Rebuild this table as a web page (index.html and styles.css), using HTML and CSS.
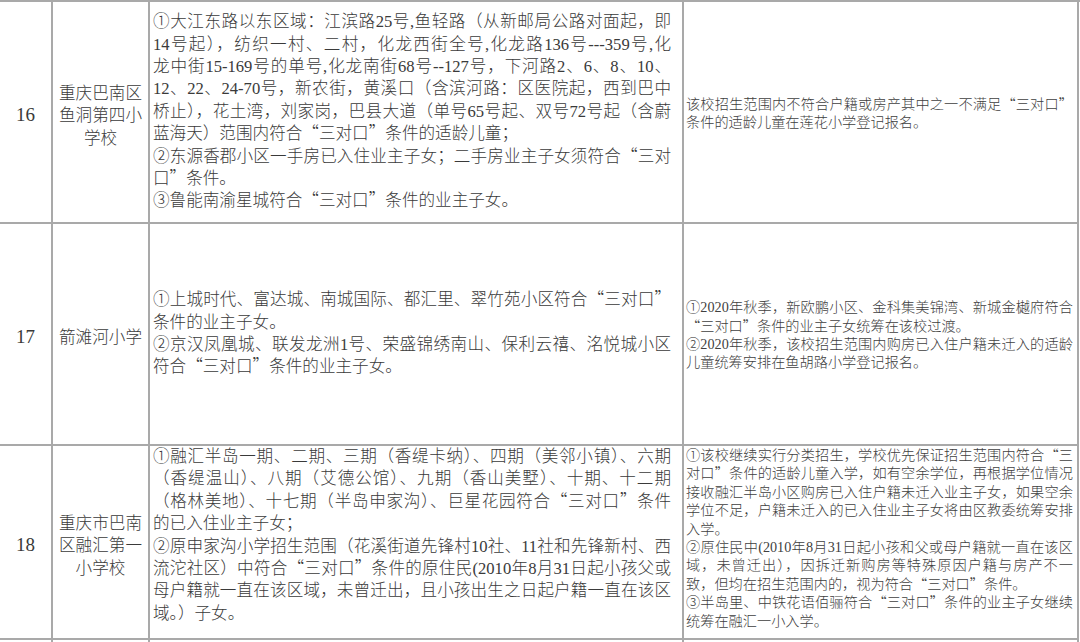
FILE: index.html
```html
<!DOCTYPE html>
<html lang="zh-CN">
<head>
<meta charset="utf-8">
<title>招生范围</title>
<link rel="stylesheet" href="styles.css">
</head>
<body>
<div class="sheet">
  <!-- 16 -->
  <div class="cell num">16</div>
  <div class="cell name">重庆巴南区鱼洞第四小学校</div>
  <div class="cell range">
    <div class="para">
      <span class="ln">①大江东路以东区域：江滨路25号,鱼轻路（从新邮局公路对面起，即</span>
      <span class="ln">14号起），纺织一村、二村，化龙西街全号,化龙路136号---359号,化</span>
      <span class="ln">龙中街15-169号的单号,化龙南街68号--127号，下河路2、6、8、10、</span>
      <span class="ln">12、22、24-70号，新农街，黄溪口（含滨河路：区医院起，西到巴中</span>
      <span class="ln">桥止），花土湾，刘家岗，巴县大道（单号65号起、双号72号起（含蔚</span>
      蓝海天）范围内符合<span class="q">“三对口”</span>条件的适龄儿童；
    </div>
    <div class="para">
      <span class="ln">②东源香郡小区一手房已入住业主子女；二手房业主子女须符合<span class="q">“三对</span></span>
      <span class="q">口”</span>条件。
    </div>
    <div class="para">③鲁能南渝星城符合<span class="q">“三对口”</span>条件的业主子女。</div>
  </div>
  <div class="cell note">
    <div class="para">
      <span class="ln">该校招生范围内不符合户籍或房产其中之一不满足<span class="q">“三对口”</span></span>
      条件的适龄儿童在莲花小学登记报名。
    </div>
  </div>

  <!-- 17 -->
  <div class="cell num">17</div>
  <div class="cell name">箭滩河小学</div>
  <div class="cell range">
    <div class="para">
      <span class="ln">①上城时代、富达城、南城国际、都汇里、翠竹苑小区符合<span class="q">“三对口”</span></span>
      条件的业主子女。
    </div>
    <div class="para">
      <span class="ln">②京汉凤凰城、联发龙洲1号、荣盛锦绣南山、保利云禧、洺悦城小区</span>
      符合<span class="q">“三对口”</span>条件的业主子女。
    </div>
  </div>
  <div class="cell note">
    <div class="para">
      <span class="ln">①2020年秋季，新欧鹏小区、金科集美锦湾、新城金樾府符合</span>
      <span class="q">“三对口”</span>条件的业主子女统筹在该校过渡。
    </div>
    <div class="para">
      <span class="ln">②2020年秋季，该校招生范围内购房已入住户籍未迁入的适龄</span>
      儿童统筹安排在鱼胡路小学登记报名。
    </div>
  </div>

  <!-- 18 -->
  <div class="cell num">18</div>
  <div class="cell name">重庆市巴南区融汇第一小学校</div>
  <div class="cell range top">
    <div class="para">
      <span class="ln">①融汇半岛一期、二期、三期（香缇卡纳）、四期（美邻小镇）、六期</span>
      <span class="ln">（香缇温山）、八期（艾德公馆）、九期（香山美墅）、十期、十二期</span>
      <span class="ln">（格林美地）、十七期（半岛申家沟）、巨星花园符合<span class="q">“三对口”</span>条件</span>
      的已入住业主子女；
    </div>
    <div class="para">
      <span class="ln">②原申家沟小学招生范围（花溪街道先锋村10社、11社和先锋新村、西</span>
      <span class="ln">流沱社区）中符合<span class="q">“三对口”</span>条件的原住民(2010年8月31日起小孩父或</span>
      <span class="ln">母户籍就一直在该区域，未曾迁出，且小孩出生之日起户籍一直在该区</span>
      域。）子女。
    </div>
  </div>
  <div class="cell note top">
    <div class="para">
      <span class="ln">①该校继续实行分类招生，学校优先保证招生范围内符合<span class="q">“三</span></span>
      <span class="ln">对口<span class="q">”</span>条件的适龄儿童入学，如有空余学位，再根据学位情况</span>
      <span class="ln">接收融汇半岛小区购房已入住户籍未迁入业主子女，如果空余</span>
      <span class="ln">学位不足，户籍未迁入的已入住业主子女将由区教委统筹安排</span>
      入学。
    </div>
    <div class="para">
      <span class="ln">②原住民中(2010年8月31日起小孩和父或母户籍就一直在该区</span>
      <span class="ln">域，未曾迁出），因拆迁新购房等特殊原因户籍与房产不一</span>
      致，但均在招生范围内的，视为符合<span class="q">“三对口”</span>条件。
    </div>
    <div class="para">
      <span class="ln">③半岛里、中铁花语佰骊符合<span class="q">“三对口”</span>条件的业主子女继续</span>
      统筹在融汇一小入学。
    </div>
  </div>

  <!-- next row (cut off at the frame edge) -->
  <div class="cell num last"></div>
  <div class="cell name last"></div>
  <div class="cell range last"></div>
  <div class="cell note last"></div>
</div>
</body>
</html>
```

FILE: styles.css
```css
html, body {
  margin: 0;
  padding: 0;
  background: #ffffff;
}

body {
  width: 1080px;
  height: 642px;
  overflow: hidden;
  font-family: "Liberation Serif", "Noto Sans CJK SC", serif;
  color: #3a3a3a;
}

.sheet {
  display: grid;
  grid-template-columns: 53px 97px 534px 395px;
  grid-template-rows: 222px 222px 194px 2px;
  border-top: 2px solid #a9a9a9;
}

.cell {
  border-right: 2px solid #a9a9a9;
  border-bottom: 2px solid #a9a9a9;
  display: flex;
  flex-direction: column;
  justify-content: center;
  min-width: 0;
}

.cell.top {
  justify-content: flex-start;
}

.cell.last {
  border-bottom: none;
  padding: 0;
}

.num {
  align-items: center;
  font-size: 19px;
  padding-top: 5px;
}

.name {
  font-family: "Noto Sans CJK SC", sans-serif;
  font-weight: 300;
  font-size: 16.6px;
  line-height: 22.5px;
  text-align: center;
  padding: 5px 1px 0;
}

.range {
  font-size: 16.6px;
  font-weight: 300;
  line-height: 22.4px;
  padding: 0 11px 0 3px;
}

.note {
  font-size: 14.2px;
  font-weight: 300;
  line-height: 18.4px;
  padding: 2px 4px 0 2px;
  color: #404040;
}

.note.top {
  padding-top: 0;
}

.para {
  text-align: left;
}

.ln {
  display: block;
  text-align: justify;
  text-align-last: justify;
}

.q {
  font-family: "Noto Sans CJK SC", sans-serif;
  line-height: 1;
}
```
